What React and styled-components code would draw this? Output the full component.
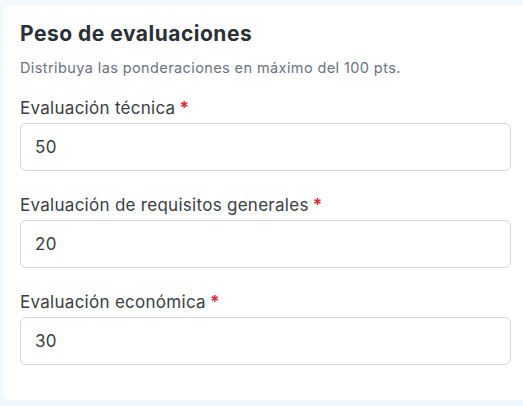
import React from "react";
import styled, { createGlobalStyle } from "styled-components";

const GlobalStyle = createGlobalStyle`
  * { box-sizing: border-box; }
  body {
    margin: 0;
    background: #f1f7fe;
    font-family: Inter, "Noto Sans", sans-serif;
  }
`;

const Page = styled.div`
  padding: 5px 0 7px 3px;
`;

const Card = styled.section`
  background: #ffffff;
  border-radius: 8px 0 0 8px;
  padding: 15px 12px 35px 17px;
`;

const Title = styled.h2`
  margin: 0;
  font-size: 21px;
  line-height: 28px;
  letter-spacing: 0.5px;
  font-weight: 700;
  color: #2b2f36;
`;

const Subtitle = styled.p`
  margin: 10px 0 0;
  font-size: 14.5px;
  line-height: 20px;
  letter-spacing: 0.4px;
  color: #6b7280;
`;

const Fields = styled.div`
  display: flex;
  flex-direction: column;
  gap: 22px;
  margin-top: 18px;
`;

const Field = styled.label`
  display: flex;
  flex-direction: column;
  gap: 3px;
`;

const LabelText = styled.span`
  font-size: 17px;
  line-height: 24px;
  letter-spacing: 0.28px;
  color: #3a3d44;
`;

const Required = styled.span`
  color: #d92d3a;
  font-weight: 700;
  margin-left: 4px;
`;

const Input = styled.input`
  height: 48px;
  width: 100%;
  border: 1px solid #d4d6da;
  border-radius: 6px;
  padding: 0 14px;
  font-family: inherit;
  font-size: 17px;
  letter-spacing: 0.3px;
  color: #3a3d44;
  background: #ffffff;
  outline: none;
`;

const fields = [
  { label: "Evaluación técnica", value: "50" },
  { label: "Evaluación de requisitos generales", value: "20" },
  { label: "Evaluación económica", value: "30" },
];

export default function App() {
  return (
    <>
      <GlobalStyle />
      <Page>
        <Card>
          <Title>Peso de evaluaciones</Title>
          <Subtitle>Distribuya las ponderaciones en máximo del 100 pts.</Subtitle>
          <Fields>
            {fields.map((f) => (
              <Field key={f.label}>
                <LabelText>
                  {f.label}
                  <Required>*</Required>
                </LabelText>
                <Input type="text" defaultValue={f.value} />
              </Field>
            ))}
          </Fields>
        </Card>
      </Page>
    </>
  );
}
